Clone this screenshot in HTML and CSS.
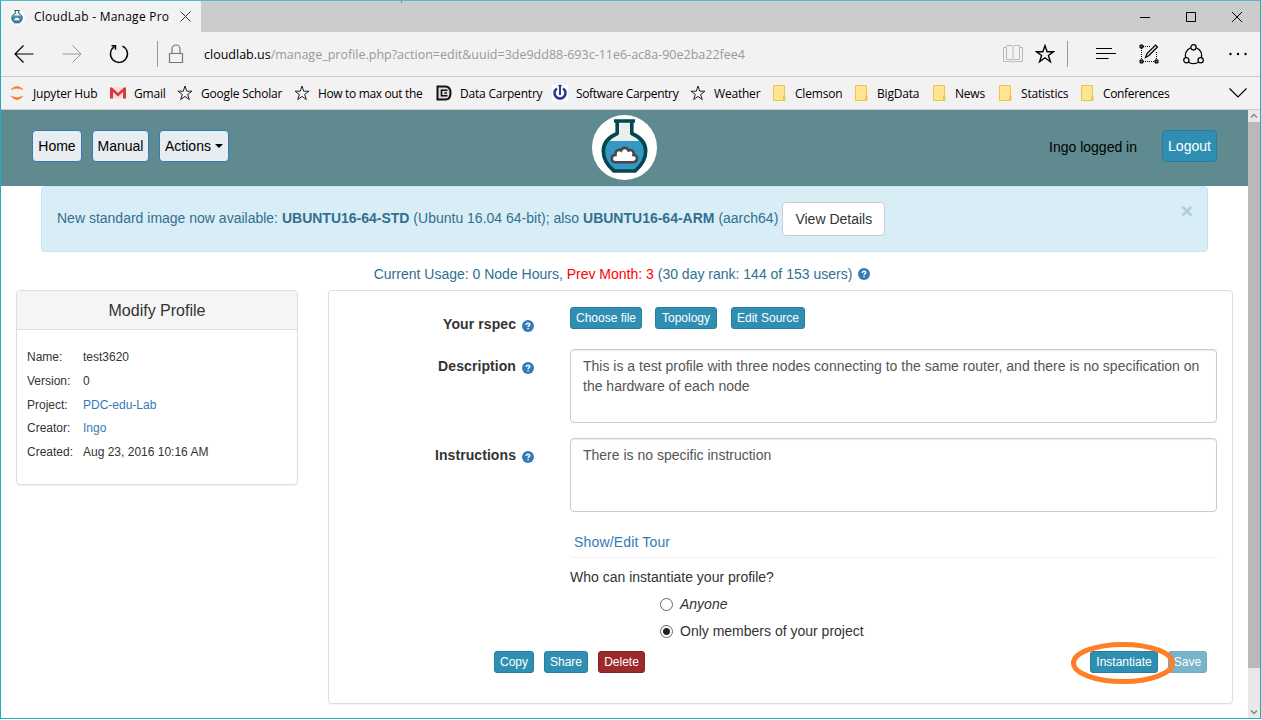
FILE: index.html
```html
<!DOCTYPE html>
<html lang="en">
<head>
<meta charset="utf-8">
<title>CloudLab - Manage Profile</title>
<link rel="stylesheet" href="styles.css">
</head>
<body>
<svg class="defs" aria-hidden="true">
  <symbol id="star" viewBox="0 0 16 16"><path d="M8 1 9.700 6.200h5.300l-4.300 3.200 1.600 5.200L8 11.400l-4.300 3.200 1.600-5.200L1 6.200h5.300z" fill="none" stroke="#222"/></symbol>
  <symbol id="folder" viewBox="0 0 16 16"><path d="M2.500.5h11v9l.5.8v5.200H2.500z" fill="#ffe590" stroke="#ecc54d"/><path d="M12.500 15v-3.500l1-1.500v5.500" fill="#ffe590" stroke="#ecc54d"/></symbol>
  <symbol id="help" viewBox="0 0 12 12"><circle cx="6" cy="6" r="6" fill="#337ab7"/><path d="M4.200 4.900C4.200 2.800 7.800 2.900 7.700 4.800 7.600 5.900 6.200 5.900 6.100 7" fill="none" stroke="#fff" stroke-width="1.500"/><path d="M5.300 7.900h1.500v1.400H5.300z" fill="#fff"/></symbol>
  <symbol id="flask" viewBox="0 0 65 65"><circle cx="32.500" cy="32.500" r="32.500" fill="#fff"/><path d="M25 6h15v13l8 5 5 9H12l5-9 8-5z" fill="#e9eef0"/><path d="M15 26h35c6 11 3 21-7 30H22C12 47 9 37 15 26z" fill="#3399c4"/><path d="M22 6h21M25.200 6v12.500C17 22 11.300 27 11.300 36c0 8.500 4.700 15 10.700 20h21c6-5 10.700-11.500 10.700-20 0-9-5.700-14-13.900-17.500V6" fill="none" stroke="#03474f" stroke-width="3.600" stroke-linejoin="round"/><path d="M23 47.300c-5-1-4-7.300.5-7.300-.500-4.500 3-6 5.500-4.500 1.500-3.500 6-3.500 7.500 0 3-1.500 6 1 5 4.500 4.500 0 5 6.300 0 7.300z" fill="#fff" stroke="#4d4649" stroke-width="2.600"/></symbol>
</svg>
<div class="window">
  <div class="titlebar">
    <div class="tab">
      <svg class="favicon"><use href="#flask"/></svg>
      <span class="tab-title">CloudLab - Manage Pro</span>
      <svg class="tab-close" viewBox="0 0 11 11"><path d="M.5.5l10 10m0-10-10 10" stroke="#333" fill="none"/></svg>
    </div>
    <span class="notch"></span>
    <div class="controls">
      <svg viewBox="0 0 12 12"><path d="M1 6.500h10" stroke="#000"/></svg>
      <svg viewBox="0 0 12 12"><path d="M1.500 1.500h9v9h-9z" stroke="#000" fill="none"/></svg>
      <svg viewBox="0 0 12 12"><path d="M1 1l10 10M11 1 1 11" stroke="#000"/></svg>
    </div>
  </div>
  <div class="toolbar">
    <svg class="nav-icon back" viewBox="0 0 20 18"><path d="M19.500 9H1M9.500.5 1 9l8.500 8.500" fill="none" stroke="#000" stroke-width="1.200"/></svg>
    <svg class="nav-icon forward" viewBox="0 0 20 18"><path d="M.5 9H19M10.500.5 19 9l-8.500 8.500" fill="none" stroke="#999"/></svg>
    <svg class="reload" viewBox="0 0 20 20"><path d="M13.500 2.200A8.500 8.500 0 1 1 5.500 2.700" fill="none" stroke="#000" stroke-width="1.400"/><path d="M2.500 1.700h4v4" fill="none" stroke="#000" stroke-width="1.400"/></svg>
    <span class="divider"></span>
    <svg class="lock" viewBox="0 0 16 20"><path d="M1.500 9.500h13v9h-13zM4 9.500V5a4 4 0 0 1 8 0v4.500" fill="none" stroke="#777" stroke-width="1.200"/></svg>
    <span class="url"><b>cloudlab.us</b>/manage_profile.php?action=edit&amp;uuid=3de9dd88-693c-11e6-ac8a-90e2ba22fee4</span>
    <svg class="book" viewBox="0 0 20 18"><path d="M3.500 2.500h-3v14h8.500l1 1 1-1h8.500v-14h-3M3.500.5H9l1 1 1-1h5.500v14H11l-1 1-1-1H3.500zM10 1.500v14" fill="none" stroke="#bbb"/></svg>
    <svg class="fav" viewBox="0 0 20 20"><path d="M10 1.600 12.100 7.700h6.300l-5 3.700 2 6.300-5.400-3.900-5.400 3.900 2-6.300-5-3.700h6.300z" fill="none" stroke="#000" stroke-width="1.400"/></svg>
    <span class="divider second"></span>
    <svg class="hub" viewBox="0 0 20 12"><path d="M0 .5h16M0 5.500h20M0 10.500h12.500" stroke="#000"/></svg>
    <svg class="note" viewBox="0 0 20 20"><path d="M4 2.500h8M2.500 4v12M4 17.500h12M17.500 8v8" fill="none" stroke="#000" stroke-dasharray="1 1"/><path d="M1 1h3v3H1zM1 16h3v3H1zM16 16h3v3h-3z" fill="#555" stroke="#000"/><path d="M6.500 13.500 8 9.500 16.500 1l2 2-8.500 8.500z" fill="#ddd" stroke="#000" stroke-width="1.200"/></svg>
    <svg class="share" viewBox="0 0 20 20"><circle cx="10" cy="11" r="7.800"/><circle cx="10" cy="3.200" r="2.500"/><circle cx="3.200" cy="15.500" r="2.500"/><circle cx="16.800" cy="15.500" r="2.500"/></svg>
    <svg class="dots" viewBox="0 0 18 4"><circle cx="1.500" cy="2" r="1.200"/><circle cx="9" cy="2" r="1.200"/><circle cx="16.500" cy="2" r="1.200"/></svg>
  </div>
  <div class="bookmarks">
    <a><svg viewBox="0 0 16 16"><path d="M2 4.500Q8-1.500 14 4.500 8 1.800 2 4.500zM2 11q6 7 12 0-6 3.500-12 0z" fill="#f47521" stroke="#f47521" stroke-width=".6"/></svg><span>Jupyter Hub</span></a>
    <a><svg viewBox="0 0 16 16"><path d="M0 2.500h16v11H0z" fill="#f3dddd"/><path d="M0 2.500v11h3V7l5 4.500L13 7v6.500h3v-11h-2L8 8 2 2.500z" fill="#d93a3c"/></svg><span>Gmail</span></a>
    <a><svg><use href="#star"/></svg><span>Google Scholar</span></a>
    <a><svg><use href="#star"/></svg><span class="tight">How to max out the</span></a>
    <a><svg viewBox="0 0 16 16"><path d="M1.500 1.500h8q5 0 5 6.500t-5 6.500h-8z" fill="#ddd" stroke="#111" stroke-width="2"/><path d="M11.500 5.200H5.500v5.600h6M8.500 8h2.500" fill="none" stroke="#111" stroke-width="1.600"/></svg><span>Data Carpentry</span></a>
    <a><svg viewBox="0 0 16 16"><path d="M0 0h16v16H0z" fill="#fff"/><path d="M5 3.500a5.500 5.500 0 1 0 6 0" fill="none" stroke="#2b3990" stroke-width="2.600"/><path d="M6 0h4l-1 2v8H7V2z" fill="#2b3990"/></svg><span class="tight">Software Carpentry</span></a>
    <a><svg><use href="#star"/></svg><span>Weather</span></a>
    <a><svg><use href="#folder"/></svg><span>Clemson</span></a>
    <a><svg><use href="#folder"/></svg><span>BigData</span></a>
    <a><svg><use href="#folder"/></svg><span>News</span></a>
    <a><svg><use href="#folder"/></svg><span>Statistics</span></a>
    <a><svg><use href="#folder"/></svg><span class="tight">Conferences</span></a>
    <svg class="chevron" viewBox="0 0 18 10"><path d="M.5.5 9 9 17.500.5" fill="none" stroke="#000" stroke-width="1.200"/></svg>
  </div>
  <div class="viewport">
    <div class="page">
      <header class="navbar">
        <nav class="nav-left">
          <a class="nav-btn home">Home</a>
          <a class="nav-btn manual">Manual</a>
          <a class="nav-btn actions">Actions<span class="caret"></span></a>
        </nav>
        <svg class="logo"><use href="#flask"/></svg>
        <div class="nav-right"><span class="who">Ingo logged in</span><a class="logout">Logout</a></div>
      </header>
      <div class="alert">
        <span class="message">New standard image now available: <b>UBUNTU16-64-STD</b> (Ubuntu 16.04 64-bit); also <b>UBUNTU16-64-ARM</b> (aarch64)</span>
        <a class="details">View Details</a>
        <span class="dismiss">×</span>
      </div>
      <div class="usage"><span>Current Usage: 0 Node Hours, <em>Prev Month: 3</em> (30 day rank: 144 of 153 users)</span><svg class="help"><use href="#help"/></svg></div>
      <div class="columns">
        <section class="panel profile">
          <h3>Modify Profile</h3>
          <dl>
            <dt>Name:</dt><dd>test3620</dd>
            <dt>Version:</dt><dd>0</dd>
            <dt>Project:</dt><dd><a>PDC-edu-Lab</a></dd>
            <dt>Creator:</dt><dd><a>Ingo</a></dd>
            <dt>Created:</dt><dd>Aug 23, 2016 10:16 AM</dd>
          </dl>
        </section>
        <section class="panel form">
          <div class="row rspec">
            <label class="label">Your rspec<svg class="help"><use href="#help"/></svg></label>
            <div class="buttons"><a class="btn file">Choose file</a><a class="btn topology">Topology</a><a class="btn source">Edit Source</a></div>
          </div>
          <div class="row">
            <label class="label">Description<svg class="help"><use href="#help"/></svg></label>
            <div class="textbox">This is a test profile with three nodes connecting to the same router, and there is no specification on<br>the hardware of each node</div>
          </div>
          <div class="row">
            <label class="label">Instructions<svg class="help"><use href="#help"/></svg></label>
            <div class="textbox">There is no specific instruction</div>
          </div>
          <div class="options">
            <div class="tour"><a>Show/Edit Tour</a></div>
            <p>Who can instantiate your profile?</p>
            <div class="choice"><span class="radio"></span><i>Anyone</i></div>
            <div class="choice"><span class="radio checked"></span>Only members of your project</div>
          </div>
          <div class="actions-row">
            <a class="btn copy">Copy</a><a class="btn share-btn">Share</a><a class="btn delete">Delete</a>
            <span class="instantiate-wrap"><a class="btn instantiate">Instantiate</a><svg class="ring" viewBox="0 0 106 44"><ellipse cx="53" cy="22" rx="49.500" ry="18.500" fill="none" stroke="#ff7f27" stroke-width="5"/></svg></span>
            <a class="btn save">Save</a>
          </div>
        </section>
      </div>
    </div>
    <div class="scrollbar">
      <svg viewBox="0 0 12 12"><path d="M3 7.500 6 4.500l3 3" fill="none" stroke="#888" stroke-width="1.500"/></svg>
      <span class="thumb"></span>
      <svg class="down" viewBox="0 0 12 12"><path d="M3 4.500l3 3 3-3" fill="none" stroke="#888" stroke-width="1.500"/></svg>
    </div>
  </div>
</div>
</body>
</html>
```
FILE: styles.css
```css
* { box-sizing: border-box; }
body { margin: 0; background: #fff; overflow: hidden; font: 14px/20px "Liberation Sans", Arial, sans-serif; color: #333; }
svg { display: block; flex: none; }
.defs { position: absolute; width: 0; height: 0; }
.window { width: 1261px; height: 719px; border: 1px solid #1caec4; border-top-color: #55b9ca; display: flex; flex-direction: column; overflow: hidden; }

.titlebar { height: 31px; flex: none; background: #ccc; display: flex; justify-content: space-between; font: 12px/16px "Open Sans", sans-serif; color: #000; }
.tab { width: 200px; background: #f2f2f2; display: flex; align-items: center; padding-left: 8px; }
.favicon { width: 16px; height: 16px; }
.tab-title { width: 137px; margin-left: 9px; white-space: nowrap; letter-spacing: .25px; }
.tab-close { width: 11px; height: 11px; margin-left: 9px; }
.notch { width: 1px; height: 2px; background: #888; margin-right: auto; margin-left: 200px; }
.controls { display: flex; align-items: center; gap: 34px; padding-right: 17px; }
.controls svg { width: 12px; height: 12px; }

.toolbar { height: 44px; flex: none; background: #f2f2f2; display: flex; align-items: center; padding-left: 13px; }
.nav-icon { width: 20px; height: 18px; }
.forward { margin-left: 28px; }
.reload { width: 20px; height: 20px; margin-left: 27px; }
.divider { width: 1px; height: 26px; background: #999; margin-left: 28px; }
.lock { width: 16px; height: 20px; margin-left: 10px; }
.url { width: 799px; margin-left: 20px; padding-top: 2px; font: 12.5px/18px "Open Sans", sans-serif; color: #999; white-space: nowrap; }
.url b { font-weight: 400; color: #000; }
.book { width: 20px; height: 18px; }
.fav { width: 20px; height: 20px; margin-left: 12px; }
.second { margin-left: 12px; }
.hub { width: 20px; height: 12px; margin-left: 28px; }
.note { width: 20px; height: 20px; margin-left: 23px; }
.share { width: 21px; height: 21px; margin-left: 24px; fill: none; stroke: #000; stroke-width: 1.2; }
.share circle + circle { fill: #f2f2f2; }
.dots { width: 18px; height: 4px; margin-left: 25px; }

.bookmarks { height: 34px; flex: none; background: #f2f2f2; border: solid #ccc; border-width: 1px 0; display: grid; grid-template-columns: 101px 67px 117px 142px 116px 138px 81px 82px 78px 66px 82px 150px 18px; align-items: center; padding-left: 8px; font: 12px/16px "Open Sans", sans-serif; color: #000; letter-spacing: -.2px; }
.bookmarks a { display: flex; align-items: center; gap: 8px; white-space: nowrap; }
.bookmarks a svg { width: 16px; height: 16px; }
.bookmarks a span { padding-top: 2px; }
.bookmarks .tight { letter-spacing: -.35px; }
.chevron { width: 18px; height: 10px; }

.viewport { flex: 1; display: flex; min-height: 0; }
.page { width: 1247px; background: #fff; }
.scrollbar { width: 12px; background: #e8e8e8; display: flex; flex-direction: column; }
.scrollbar svg { width: 12px; height: 12px; }
.thumb { height: 546px; background: #b9b9b9; }
.scrollbar .down { margin-top: auto; }

.navbar { height: 76px; background: #5f8a8f; display: grid; grid-template-columns: 591px 65px 1fr; align-items: start; padding-right: 31px; color: #000; }
.nav-left { display: flex; gap: 10px; padding: 20px 0 0 31px; }
.nav-btn, .logout { height: 32px; border: 1px solid #337ab7; border-radius: 4px; background: #e7edf0; display: flex; align-items: center; justify-content: center; }
.home { width: 50px; }
.manual { width: 57px; }
.actions { width: 70px; }
.caret { margin-left: 4px; border: 4px solid transparent; border-top-color: #000; border-bottom: 0; }
.logo { width: 65px; height: 65px; margin-top: 5px; }
.nav-right { display: flex; justify-content: flex-end; align-items: center; gap: 25px; padding-top: 20px; }
.logout { width: 55px; background: #2f8fb3; border-color: #2a7d9c; color: #fff; }
.who { padding-top: 2px; }

.alert { height: 66px; margin: 0 40px; border: 1px solid #bce8f1; border-radius: 4px; background: #d9edf7; color: #31708f; display: flex; align-items: center; padding: 0 14px 0 15px; white-space: nowrap; }
.message { padding-bottom: 2px; }
.details { width: 103px; height: 34px; margin-left: 4px; border: 1px solid #ccc; border-radius: 4px; background: #fff; color: #333; display: flex; align-items: center; justify-content: center; }
.dismiss { margin-left: auto; padding-bottom: 17px; font-size: 21px; font-weight: 700; color: #aecbda; }
.usage { height: 38px; padding: 5px 5px 0 0; display: flex; justify-content: center; align-items: center; gap: 6px; color: #31708f; }
.usage em { font-style: normal; color: #f00; }
.help { width: 12px; height: 12px; }

.columns { display: flex; align-items: flex-start; gap: 30px; padding-left: 15px; }
.panel { border: 1px solid #ddd; border-radius: 4px; background: #fff; box-shadow: 0 1px 1px rgba(0,0,0,.05); }
.profile { width: 282px; height: 195px; }
.profile h3 { height: 39px; margin: 0; border-bottom: 1px solid #ddd; border-radius: 3px 3px 0 0; background: #f5f5f5; font: 16px/40px "Liberation Sans", Arial, sans-serif; text-align: center; }
.profile dl { margin: 16px 0 0 10px; display: grid; grid-template-columns: 56px 1fr; font-size: 12px; line-height: 23.8px; }
.profile dd { margin: 0; }
.profile a, .tour a { color: #337ab7; }
.form { width: 905px; height: 414px; padding: 16px 15px 0 0; }
.row { display: grid; grid-template-columns: 205px 647px; column-gap: 36px; margin-bottom: 15px; }
.rspec { height: 27px; }
.label { display: flex; justify-content: flex-end; gap: 6px; height: 20px; margin-top: 7px; font-weight: 700; letter-spacing: .08px; }
.label .help { margin-top: 6px; }
.buttons { display: flex; gap: 13px; }
.btn { height: 22px; border: 1px solid #2a7d9c; border-radius: 3px; background: #2f8fb3; color: #fff; font-size: 12px; display: flex; align-items: center; justify-content: center; white-space: nowrap; }
.file { width: 72px; }
.topology { width: 62px; }
.source { width: 74px; margin-left: 1px; }
.textbox { height: 74px; border: 1px solid #ccc; border-radius: 4px; box-shadow: inset 0 1px 1px rgba(0,0,0,.075); padding: 6px 12px; color: #555; white-space: nowrap; }
.options { margin-left: 241px; }
.tour { height: 31px; padding: 5px 0 0 4px; border-bottom: 1px solid #f0f0f0; border-radius: 4px; letter-spacing: .16px; }
.options p { margin: 9px 0 7px; }
.choice { display: flex; align-items: center; gap: 7px; height: 20px; margin: 0 0 7px 90px; }
.radio { width: 13px; height: 13px; border: 1px solid #666; border-radius: 50%; }
.checked { background: radial-gradient(circle, #222 3px, #fff 4px); }
.actions-row { display: flex; gap: 10px; margin: 10px 10px 0 165px; }
.copy { width: 40px; }
.share-btn { width: 44px; }
.delete { width: 47px; background: #9b2a2c; border-color: #852224; }
.instantiate-wrap { margin-left: auto; position: relative; }
.instantiate { width: 68px; }
.ring { position: absolute; left: -20px; top: -10px; width: 106px; height: 44px; z-index: 1; }
.save { width: 39px; background: #78b4cc; border-color: #73acc2; }
```
